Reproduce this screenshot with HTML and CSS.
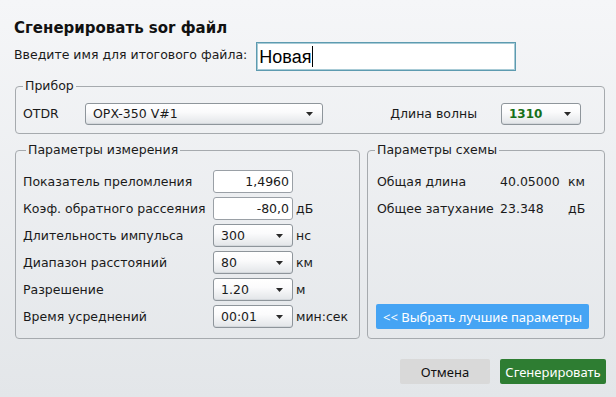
FILE: index.html
```html
<!DOCTYPE html>
<html lang="ru">
<head>
    <meta charset="UTF-8">
    <meta name="viewport" content="width=device-width, initial-scale=1.0">
    <title>Сгенерировать sor файл</title>
    <link rel="stylesheet" href="styles.css">
</head>
<body>
    <div class="dialog">
        <h1 class="title">Сгенерировать sor файл</h1>

        <div class="name-row">
            <label class="name-label">Введите имя для итогового файла:</label>
            <div class="name-field">Новая<span class="caret"></span></div>
        </div>

        <fieldset class="group device">
            <legend>Прибор</legend>
            <div class="device-row">
                <span class="device-label">OTDR</span>
                <div class="select select-otdr">
                    <span>OPX-350 V#1</span>
                    <svg class="arrow" width="7" height="4" viewBox="0 0 7 4"><path d="M0 0h7L3.5 4z"/></svg>
                </div>
                <span class="wave-label">Длина волны</span>
                <div class="select select-wave">
                    <span class="wave-value">1310</span>
                    <svg class="arrow" width="7" height="4" viewBox="0 0 7 4"><path d="M0 0h7L3.5 4z"/></svg>
                </div>
            </div>
        </fieldset>

        <div class="columns">
            <fieldset class="group measure">
                <legend>Параметры измерения</legend>
                <div class="param-row">
                    <span class="param-label">Показатель преломления</span>
                    <div class="number">1,4960</div>
                </div>
                <div class="param-row">
                    <span class="param-label">Коэф. обратного рассеяния</span>
                    <div class="number">-80,0</div>
                    <span class="unit">дБ</span>
                </div>
                <div class="param-row">
                    <span class="param-label">Длительность импульса</span>
                    <div class="select select-small">
                        <span>300</span>
                        <svg class="arrow" width="7" height="4" viewBox="0 0 7 4"><path d="M0 0h7L3.5 4z"/></svg>
                    </div>
                    <span class="unit">нс</span>
                </div>
                <div class="param-row">
                    <span class="param-label">Диапазон расстояний</span>
                    <div class="select select-small">
                        <span>80</span>
                        <svg class="arrow" width="7" height="4" viewBox="0 0 7 4"><path d="M0 0h7L3.5 4z"/></svg>
                    </div>
                    <span class="unit">км</span>
                </div>
                <div class="param-row">
                    <span class="param-label">Разрешение</span>
                    <div class="select select-small">
                        <span>1.20</span>
                        <svg class="arrow" width="7" height="4" viewBox="0 0 7 4"><path d="M0 0h7L3.5 4z"/></svg>
                    </div>
                    <span class="unit">м</span>
                </div>
                <div class="param-row">
                    <span class="param-label">Время усреднений</span>
                    <div class="select select-small">
                        <span>00:01</span>
                        <svg class="arrow" width="7" height="4" viewBox="0 0 7 4"><path d="M0 0h7L3.5 4z"/></svg>
                    </div>
                    <span class="unit">мин:сек</span>
                </div>
            </fieldset>

            <fieldset class="group scheme">
                <legend>Параметры схемы</legend>
                <div class="scheme-row">
                    <span class="scheme-label">Общая длина</span>
                    <span class="scheme-value">40.05000</span>
                    <span>км</span>
                </div>
                <div class="scheme-row">
                    <span class="scheme-label">Общее затухание</span>
                    <span class="scheme-value">23.348</span>
                    <span>дБ</span>
                </div>
                <button class="btn btn-best">&lt;&lt; Выбрать лучшие параметры</button>
            </fieldset>
        </div>

        <div class="footer">
            <button class="btn btn-cancel">Отмена</button>
            <button class="btn btn-generate">Сгенерировать</button>
        </div>
    </div>
</body>
</html>
```

FILE: styles.css
```css
html, body {
    margin: 0;
    padding: 0;
    height: 100%;
}
body {
    font-family: "DejaVu Sans", Verdana, sans-serif;
    font-size: 12.5px;
    line-height: 16px;
    color: #1a1a1a;
    background: linear-gradient(#f5f6f8, #e3e6e9);
}
.dialog {
    padding: 0 11px 0 15px;
}
.title {
    margin: 18px 0 0 -1px;
    font-size: 15px;
    line-height: 20px;
    font-weight: bold;
    color: #111;
}
.name-row {
    display: flex;
    align-items: center;
    margin-top: 4px;
    margin-left: -1px;
}
.name-label {
    padding-bottom: 4px;
}
.name-field {
    width: 256px;
    height: 27px;
    margin-left: 9px;
    padding-left: 2px;
    display: flex;
    align-items: center;
    background: #fff;
    border: 1px solid #5d9bb0;
    box-shadow: inset 0 0 0 1px #a8cbd6;
    font-family: "Liberation Sans", Arial, sans-serif;
    font-size: 18px;
    color: #000;
}
.caret {
    display: inline-block;
    width: 1px;
    height: 21px;
    margin-left: 1px;
    background: #000;
}
.group {
    margin: 0;
    border: 1px solid #a6aaae;
    border-radius: 4px;
    padding: 9px 23px 8px 7px;
}
.group legend {
    padding: 0 2px;
    line-height: 16px;
}
.device {
    margin-top: 7px;
}
.device-row {
    display: flex;
    align-items: center;
}
.device-label {
    width: 62px;
}
.select {
    height: 20px;
    box-sizing: border-box;
    display: flex;
    align-items: center;
    justify-content: space-between;
    padding: 0 9px 0 7px;
    border: 1px solid #8e959b;
    border-radius: 3px;
    background: linear-gradient(#ffffff, #fbfbfc 40%, #e2e5e8);
    box-shadow: inset 0 -1px 0 #d4d8dc;
}
.select-otdr {
    width: 238px;
    height: 22px;
}
.select-wave {
    width: 80px;
    height: 22px;
}
.wave-label {
    margin-left: auto;
    margin-right: 24px;
}
.wave-value {
    font-size: 12px;
    font-weight: bold;
    color: #16701a;
}
.arrow {
    fill: #2a2a2a;
}
.columns {
    display: grid;
    grid-template-columns: 345px 1fr;
    gap: 7px;
    margin-top: 8px;
}
.measure {
    padding: 12px 7px 10px 7px;
}
.measure legend {
    margin-left: 3px;
}
.param-row {
    display: flex;
    align-items: center;
    height: 23px;
    margin-bottom: 4px;
}
.param-row:last-child {
    margin-bottom: 0;
}
.param-label {
    width: 190px;
    white-space: nowrap;
}
.number {
    width: 80px;
    height: 23px;
    box-sizing: border-box;
    padding-right: 3px;
    display: flex;
    align-items: center;
    justify-content: flex-end;
    background: #fff;
    border: 1px solid #9aa0a6;
    border-radius: 3px;
}
.select-small {
    width: 80px;
    height: 23px;
}
.unit {
    margin-left: 3px;
}
.scheme {
    display: flex;
    flex-direction: column;
    padding: 16px 15px 9px 9px;
}
.scheme legend {
    margin-left: -2px;
}
.scheme-row {
    display: flex;
    height: 16px;
    margin-bottom: 11px;
}
.scheme-label {
    width: 123px;
}
.scheme-value {
    width: 68px;
}
.btn {
    border: none;
    border-radius: 2px;
    font-family: "Noto Sans", "Open Sans", sans-serif;
    font-size: 13px;
    height: 25px;
    padding: 0;
    cursor: pointer;
}
.btn-best {
    margin-top: auto;
    margin-left: -1px;
    width: 213px;
    background: #45a4f4;
    color: #fff;
}
.footer {
    display: flex;
    justify-content: flex-end;
    gap: 10px;
    margin-top: 20px;
    margin-right: -1px;
}
.btn-cancel {
    width: 90px;
    background: #d9d9d9;
    color: #111;
}
.btn-generate {
    width: 106px;
    background: #2e7d32;
    color: #fff;
}
```
